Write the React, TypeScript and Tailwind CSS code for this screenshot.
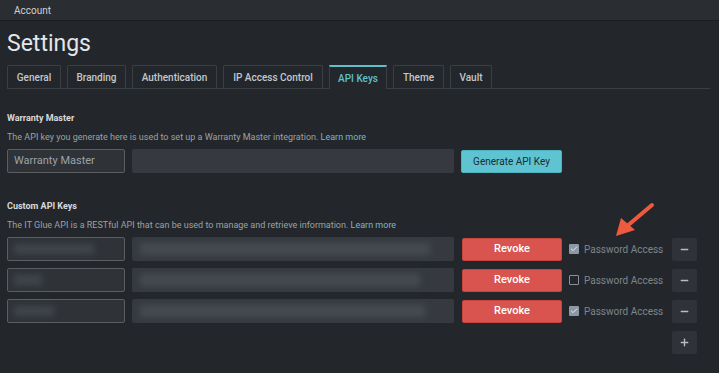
import { Minus, Plus, Check } from "lucide-react";

const tabs = [
  { label: "General", w: "w-[54px]" },
  { label: "Branding", w: "w-[59px]" },
  { label: "Authentication", w: "w-[85px]" },
  { label: "IP Access Control", w: "w-[100px]" },
  { label: "API Keys", w: "w-[58px]", active: true },
  { label: "Theme", w: "w-[51px]" },
  { label: "Vault", w: "w-[42px]" },
];

const keys = [
  { checked: true, nameW: "w-[80px]", keyW: "w-[290px]" },
  { checked: false, nameW: "w-[28px]", keyW: "w-[280px]" },
  { checked: true, nameW: "w-[40px]", keyW: "w-[285px]" },
];

function Arrow() {
  return (
    <svg className="absolute left-[610px] top-[198px]" width="48" height="44" viewBox="0 0 48 44">
      <line x1="42" y1="7" x2="16" y2="29" stroke="#ee5a3e" strokeWidth="4" strokeLinecap="round" />
      <polygon points="6,38 11,20 25,32" fill="#ee5a3e" />
    </svg>
  );
}

export default function App() {
  return (
    <div className="relative w-[719px] h-[373px] overflow-hidden bg-[#23272b] font-['Roboto',sans-serif] text-[#c9cdd1]">
      {/* Top bar */}
      <div className="h-[21px] bg-[#2a2d31] border-b border-[#1b1d20] flex items-center px-[14px] text-[10px] text-[#cfd2d5]">
        Account
      </div>

      <div className="px-[7px]">
        <h1 className="mt-[6px] h-[33px] text-[23px] leading-[33px] text-[#e4e6e8]">Settings</h1>

        {/* Tabs */}
        <div className="mt-[5px] flex gap-[6px] items-end border-b border-[#3b3f44] h-[24px] w-[703px]">
          {tabs.map((t) =>
            t.active ? (
              <div
                key={t.label}
                className={`${t.w} h-[24px] -mb-px flex items-center justify-center bg-[#23272b] border-x border-[#3b3f44] border-t-2 border-t-[#5ec0cc] text-[10px] font-medium text-[#5ec0cc]`}
              >
                {t.label}
              </div>
            ) : (
              <div
                key={t.label}
                className={`${t.w} h-[23px] flex items-center justify-center border-x border-t border-[#3b3f44] rounded-t-[2px] text-[10px] font-medium text-[#c4c8cc]`}
              >
                {t.label}
              </div>
            )
          )}
        </div>

        {/* Warranty Master */}
        <div className="mt-[22px] text-[9px] font-bold text-[#d8dadd] leading-[14px]">Warranty Master</div>
        <div className="mt-[5px] text-[9px] leading-[14px] text-[#9ca1a6]">
          The API key you generate here is used to set up a Warranty Master integration.{" "}
          <span className="text-[#77b6d6]">Learn more</span>
        </div>
        <div className="mt-[5px] flex items-center h-[24px]">
          <div className="w-[118px] h-[24px] border border-[#5b5f64] bg-[#2f3338] rounded-[2px] flex items-center px-[6px] text-[11px] text-[#9da2a7]">
            Warranty Master
          </div>
          <div className="ml-[7px] w-[322px] h-[24px] bg-[#363a40] rounded-[2px]" />
          <button className="ml-[7px] w-[101px] h-[23px] bg-[#5ec4d2] border border-[#4fb2c0] rounded-[2px] text-[10px] text-[#1f2a30]">
            Generate API Key
          </button>
        </div>

        {/* Custom API Keys */}
        <div className="mt-[26px] text-[9px] font-bold text-[#d8dadd] leading-[14px]">Custom API Keys</div>
        <div className="mt-[5px] text-[9px] leading-[14px] text-[#9ca1a6]">
          The IT Glue API is a RESTful API that can be used to manage and retrieve information.{" "}
          <span className="text-[#77b6d6]">Learn more</span>
        </div>

        <div className="mt-[5px] flex flex-col gap-[7px]">
          {keys.map((k, i) => (
            <div key={i} className="flex items-center h-[24px]">
              <div className="w-[118px] h-[24px] border border-[#5b5f64] bg-[#2f3338] rounded-[2px] flex items-center px-[6px] overflow-hidden">
                <div className={`${k.nameW} h-[10px] bg-[#41454b] blur-[3px]`} />
              </div>
              <div className="ml-[7px] w-[322px] h-[24px] bg-[#363a40] rounded-[2px] flex items-center px-[8px] overflow-hidden">
                <div className={`${k.keyW} h-[12px] bg-[#454a50] blur-[3px]`} />
              </div>
              <button className="ml-[8px] w-[100px] h-[23px] bg-[#d9534f] border border-[#c8453f] rounded-[2px] text-[11px] font-medium text-white">
                Revoke
              </button>
              <div className="ml-[7px] flex items-center w-[95px]">
                {k.checked ? (
                  <div className="w-[10px] h-[10px] rounded-[1px] bg-[#8c98a4] flex items-center justify-center">
                    <Check size={8} strokeWidth={3} className="text-[#e8ecef]" />
                  </div>
                ) : (
                  <div className="w-[10px] h-[10px] rounded-[1px] border border-[#8a9097]" />
                )}
                <span className="ml-[5px] text-[10px] text-[#7f858b]">Password Access</span>
              </div>
              <div className="ml-[8px] w-[25px] h-[23px] bg-[#2f3339] rounded-[2px] flex items-center justify-center">
                <Minus size={11} strokeWidth={3} className="text-[#b7bcc1]" />
              </div>
            </div>
          ))}
        </div>

        <div className="mt-[8px] flex pl-[665px]">
          <div className="w-[25px] h-[23px] bg-[#2f3339] rounded-[2px] flex items-center justify-center">
            <Plus size={11} strokeWidth={3} className="text-[#b7bcc1]" />
          </div>
        </div>
      </div>

      <Arrow />
    </div>
  );
}
